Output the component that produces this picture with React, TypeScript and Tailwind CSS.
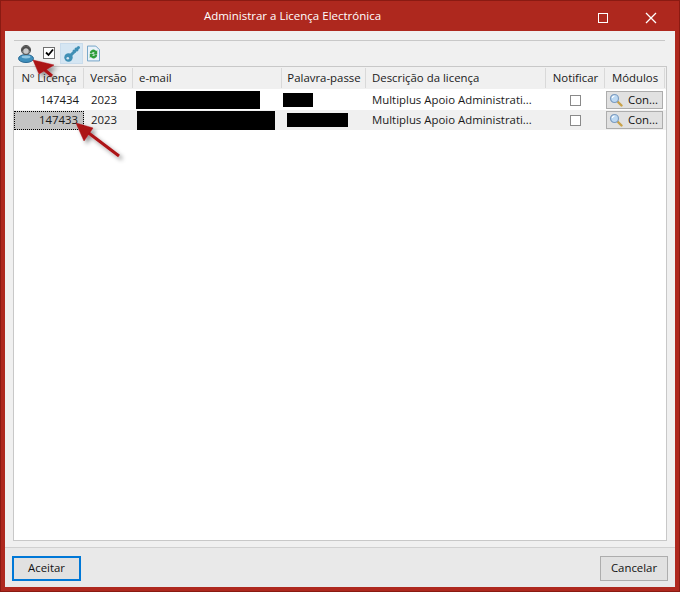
import React from 'react';

const font = { fontFamily: '"Open Sans", "Noto Sans", sans-serif' };

const Magnifier = () => (
  <svg width="14" height="14" viewBox="0 0 14 14" className="shrink-0">
    <path d="M8.5 8.5 L12.5 12.5" stroke="#c9a24a" strokeWidth="2.4" strokeLinecap="round" />
    <circle cx="5.5" cy="5.5" r="4" fill="#bcd8f2" stroke="#7d9cc0" strokeWidth="1.2" />
    <path d="M3.2 5 A2.6 2.6 0 0 1 5.5 3" stroke="#fff" strokeWidth="1.2" fill="none" />
  </svg>
);

const Check = () => <div className="w-[11px] h-[11px] border border-[#8a8a8a] bg-white" />;

const ConButton = () => (
  <div className="w-[57px] h-[18px] ml-[2px] border border-[#adadad] bg-[#e1e1e1] flex items-center pl-[2px] text-[#111]">
    <Magnifier />
    <span className="ml-[5px]">Con...</span>
  </div>
);

const Head = ({ w, children }: { w: string; children: React.ReactNode }) => (
  <div className={`${w} h-[22px] flex items-center justify-center relative`}>
    {children}
    <div className="absolute right-0 top-[1px] bottom-[1px] w-px bg-[#d9d9d9]" />
  </div>
);

const Row = ({
  id,
  selected,
  email,
  pass,
}: {
  id: string;
  selected?: boolean;
  email: string;
  pass: string;
}) => (
  <div className={`flex h-[20px] items-center ${selected ? 'bg-[#f0f0f0]' : 'bg-white'} text-[#1a1a1a]`}>
    <div
      className={`w-[70px] h-[19px] flex items-center justify-end pr-[5px] ${
        selected ? 'bg-[#c4c4c4] border border-dotted border-black' : ''
      }`}
    >
      {id}
    </div>
    <div className="w-[49px] pl-[7px]">2023</div>
    <div className="w-[149px] h-full flex items-center">
      <div className={email} />
    </div>
    <div className="w-[84px] h-full flex items-center">
      <div className={pass} />
    </div>
    <div className="w-[180px] pl-[6px] whitespace-nowrap overflow-hidden">Multiplus Apoio Administrati...</div>
    <div className="w-[58px] flex justify-center">
      <Check />
    </div>
    <ConButton />
  </div>
);

export default function App() {
  return (
    <div
      className="w-[680px] h-[592px] bg-[#ae281e] shadow-[inset_0_0_0_1px_#8a1a12] flex flex-col text-[11.4px] relative"
      style={font}
    >
      <div className="h-[31px] shrink-0 relative flex items-center justify-center text-white">
        <span className="pr-[95px] text-[11.5px]">Administrar a Licença Electrónica</span>
        <div className="absolute left-[598px] top-[13px] w-[10px] h-[10px] border border-white" />
        <svg className="absolute left-[645px] top-[12px]" width="12" height="12" viewBox="0 0 12 12">
          <path d="M1 1 L11 11 M11 1 L1 11" stroke="#fff" strokeWidth="1.3" />
        </svg>
      </div>

      <div className="mx-[5px] h-[556px] bg-[#f0f0f0] flex flex-col">
        <div className="h-[516px] flex flex-col px-[8px] pt-[9px]">
          <div className="h-px mr-[2px] ml-px bg-[#c8c8c8]" />
          <div className="h-[25px] flex items-center pl-[5px]">
            <svg width="16" height="19" viewBox="0 0 16 19">
              <ellipse cx="8" cy="14.5" rx="7.5" ry="4" fill="#3f8fbc" stroke="#2a6a94" />
              <ellipse cx="8" cy="13" rx="4.5" ry="1.4" fill="#8fc6e2" />
              <circle cx="8" cy="6" r="4.6" fill="#8b8b8b" stroke="#555" />
              <path d="M4 4.5 A4.4 4.4 0 0 1 12 4.5 L12 7.5 L10 5 L6 5 L4 7.5 Z" fill="#4d4d4d" />
              <ellipse cx="8" cy="7" rx="2.5" ry="2.7" fill="#c9c9c9" />
            </svg>
            <div className="ml-[9px] w-[12px] h-[12px] -mt-[2px] border border-[#6f6f6f] bg-white flex items-center justify-center">
              <svg width="9" height="9" viewBox="0 0 9 9">
                <path d="M1 4.5 L3.5 7 L8 1.5" stroke="#000" strokeWidth="1.8" fill="none" />
              </svg>
            </div>
            <div className="ml-[5px] w-[23px] h-[21px] bg-[#d5e6f3] border border-[#c9dcec] flex items-center justify-center">
              <svg width="18" height="18" viewBox="0 0 18 18">
                <path d="M7.5 10.5 L15.5 2.5" stroke="#3f8fb5" strokeWidth="3" strokeLinecap="round" />
                <path d="M12 3 L15 6 M10 5 L12.5 7.5" stroke="#3f8fb5" strokeWidth="1.5" />
                <circle cx="5.5" cy="12.5" r="4.2" fill="#3f8fb5" />
                <circle cx="4.8" cy="13.2" r="1.3" fill="#d5e6f3" />
              </svg>
            </div>
            <svg className="ml-[4px]" width="13" height="17" viewBox="0 0 14 17">
              <path d="M0.5 0.5 H9.5 L13.5 4.5 V16.5 H0.5 Z" fill="#eaf3fa" stroke="#6b9fc4" />
              <path d="M3 8 A3.8 3.8 0 0 1 10 6 L11 4.5 V9.5 H6.5 L8.3 7.8 A2 2 0 0 0 5 8.5 Z" fill="#2e9e3a" />
              <path d="M11 10 A3.8 3.8 0 0 1 4 12 L3 13.5 V8.8 H7.5 L5.7 10.3 A2 2 0 0 0 9 9.7 Z" fill="#2e9e3a" />
            </svg>
          </div>

          <div className="h-[475px] border border-[#c8c8c8] bg-white text-[#1a1a1a] flex flex-col">
            <div className="flex h-[22px] bg-[#f0f0f0] mb-[1px]">
              <Head w="w-[70px]">Nº Licença</Head>
              <Head w="w-[49px]">Versão</Head>
              <Head w="w-[149px]">
                <span className="w-full pl-[6px]">e-mail</span>
              </Head>
              <Head w="w-[84px]">Palavra-passe</Head>
              <Head w="w-[180px]">
                <span className="w-full pl-[6px]">Descrição da licença</span>
              </Head>
              <Head w="w-[59px]">Notificar</Head>
              <Head w="w-[60px]">Módulos</Head>
            </div>
            <Row id="147434" email="w-[124px] h-[18px] ml-[3px] bg-black" pass="w-[30px] h-[14px] ml-[1px] bg-black" />
            <Row id="147433" selected email="w-[138px] h-[19px] ml-[4px] bg-black" pass="w-[61px] h-[14px] ml-[5px] bg-black" />
          </div>
        </div>

        <div className="flex-1 border-t border-[#d0d0d0] bg-[#e9e9e9] flex items-center justify-between pl-[7px] pr-[7px] pt-[1px]">
          <div className="w-[69px] h-[25px] border-2 border-[#0078d7] bg-[#e1e1e1] flex items-center justify-center text-[#111]">
            Aceitar
          </div>
          <div className="w-[68px] h-[25px] border border-[#adadad] bg-[#e1e1e1] flex items-center justify-center text-[#111]">
            Cancelar
          </div>
        </div>
      </div>

      {/* setas vermelhas da anotação */}
      <svg className="absolute left-0 top-0 pointer-events-none" width="680" height="592">
        <defs>
          <filter id="sombra" x="-30%" y="-30%" width="160%" height="160%">
            <feDropShadow dx="3" dy="3" stdDeviation="2" floodColor="#000" floodOpacity="0.4" />
          </filter>
        </defs>
        <g filter="url(#sombra)" fill="#ac1219" stroke="#ac1219">
          <path d="M52 76 L40 66" strokeWidth="3" />
          <path d="M33 60 L54 65 L39 74 Z" strokeWidth="0.5" />
          <path d="M119 156 L86 131" strokeWidth="3" />
          <path d="M76 123 L93 128 L84 141 Z" strokeWidth="0.5" />
        </g>
      </svg>
    </div>
  );
}
